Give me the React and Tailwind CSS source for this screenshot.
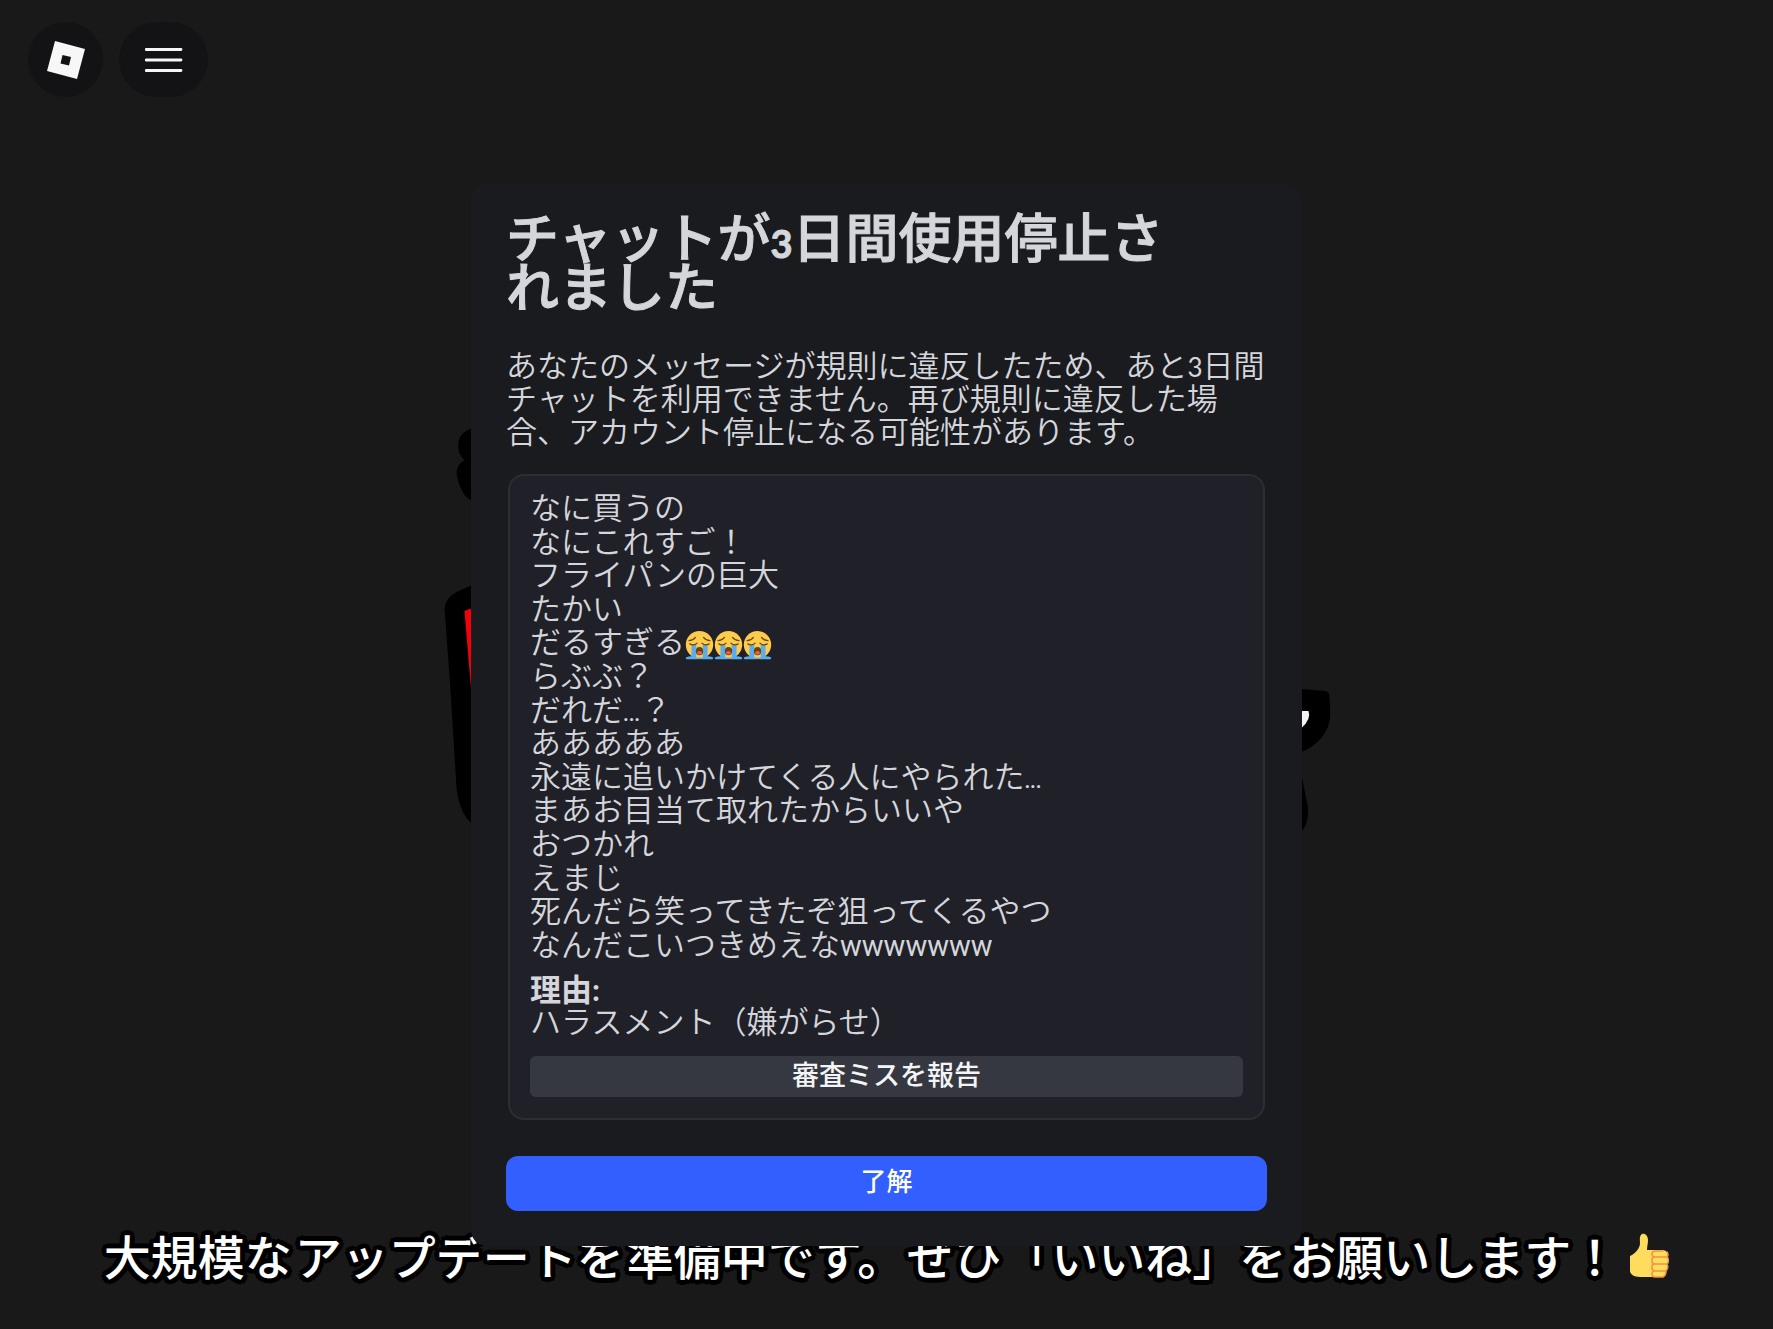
import React from "react";

const messages = [
  "なに買うの",
  "なにこれすご！",
  "フライパンの巨大",
  "たかい",
  <>だるすぎる<CryingFace /><CryingFace /><CryingFace /></>,
  "らぶぶ？",
  <>だれだ<Dots />？</>,
  "あああああ",
  <>永遠に追いかけてくる人にやられた<Dots /></>,
  "まあお目当て取れたからいいや",
  "おつかれ",
  "えまじ",
  "死んだら笑ってきたぞ狙ってくるやつ",
  <>なんだこいつきめえな<span className="font-[Roboto] text-[29px] font-normal leading-[0]">wwwwwww</span></>,
];

function Dots() {
  return <span className="font-[Lato] text-2xl font-normal leading-[0]">...</span>;
}

function CryingFace() {
  return (
    <svg viewBox="0 0 36 36" role="img" aria-label="😭" className="inline-block h-[29px] w-[29px] shrink-0 align-middle">
      <circle cx="18" cy="17" r="17" fill="#FFCB4C" />
      <path d="M8 17h6v17H8zM22 17h6v17h-6z" fill="#5DADEC" />
      <path d="M1 33Q6 30.500 14 32v3H2q-1 0-1-2zM35 33Q30 30.500 22 32v3h12q1 0 1-2z" fill="#5DADEC" />
      <path d="M13 33h10v2H13z" fill="#5DADEC" />
      <ellipse cx="18" cy="25" rx="4.500" ry="5" fill="#664500" />
      <ellipse cx="18" cy="27" rx="3" ry="2.300" fill="#E75A70" />
      <path
        d="M6 16q5 3 9-1M30 16q-5 3-9-1M5 12q5 0 8-4M31 12q-5 0-8-4"
        fill="none"
        stroke="#664500"
        strokeWidth="1.600"
        strokeLinecap="round"
      />
    </svg>
  );
}

function ThumbsUp() {
  return (
    <svg viewBox="0 0 40 45" role="img" aria-label="👍" className="ml-2 h-[45px] w-10 shrink-0">
      <path
        d="M13 1c3-1 6 2 6 6 0 4-1 6-1 10h15c5 0 7 4 5 7 2 2 2 5 0 7 1 2 1 5-1 6 1 4-1 7-5 7H11C5 44 1 41 1 38V23c4-2 9-6 10-12 0-4-1-8 2-10z"
        fill="#FFDB5E"
      />
      <path
        d="M38 24H26c-4 0-4-6 0-6h8M38 31H26c-4 0-4-6-1-7M37 38H26c-4 0-4-6-1-7M34 44h-8c-4 0-4-5-1-6M38 19c2 3 1 4 0 5 2 2 2 5 0 7 1 2 1 5-1 7 0 3-1 5-3 6"
        fill="none"
        stroke="#EE9547"
        strokeWidth="1.500"
        strokeLinecap="round"
      />
    </svg>
  );
}

// Title art of the game, mostly covered by the dialog
function GameLogo() {
  return (
    <svg
      viewBox="443 428 887 404"
      aria-hidden="true"
      className="absolute left-1/2 top-[428px] h-[404px] w-[887px] -translate-x-1/2"
    >
      <path d="M472 428q-12 4-14 13-2 13 6 19-8 5-8 13 1 10 8 22 4 5 8 5z" />
      <path d="M472 585l-16 7q-11 6-12 16l6 82 6 98q3 26 16 36z" />
      <path d="M464 611l8-3v98z" fill="#f50008" />
      <path d="M1301 689l24 2q4 1 4 5l1 17q-1 27-29 39z" />
      <path d="M1301 711h7q3 8-7 17z" fill="#f4f4f4" />
      <path d="M1301 775l6 30q3 15-6 27z" />
    </svg>
  );
}

function TopBar() {
  return (
    <header className="flex items-center gap-4 px-7 pt-[22px]">
      <button aria-label="Roblox" className="flex h-[75px] w-[75px] items-center justify-center rounded-full bg-[#131315]">
        <svg viewBox="0 0 38 38" className="h-[38px] w-[38px]">
          <path d="M8 0l30 8-8 30-30-8zM15.500 14l-2 8.500 8.500 2 2-8.500z" fill="#f7f7f8" fillRule="evenodd" />
        </svg>
      </button>
      <button aria-label="メニュー" className="flex h-[75px] w-[89px] items-center justify-center rounded-full bg-[#131315]">
        <svg viewBox="0 0 38 26" className="h-[26px] w-[38px]">
          <path d="M1 2.500h35M1 13h35M1 23.500h35" stroke="#f7f7f8" strokeWidth="2.800" strokeLinecap="round" />
        </svg>
      </button>
    </header>
  );
}

export default function App() {
  return (
    <div lang="ja" className="grid min-h-screen overflow-hidden bg-[#191919] font-['Noto_Sans_CJK_JP',sans-serif]">
      <div className="relative col-start-1 row-start-1 flex flex-col justify-between">
        <GameLogo />
        <TopBar />
        <p className="flex items-center justify-center gap-[3px] whitespace-nowrap pb-11 text-[47px] font-medium leading-[60px] text-white [text-shadow:5px_0_0_#000,4px_3px_0_#000,3px_4px_0_#000,0_5px_0_#000,-3px_4px_0_#000,-4px_3px_0_#000,-5px_0_0_#000,-4px_-3px_0_#000,-3px_-4px_0_#000,0_-5px_0_#000,3px_-4px_0_#000,4px_-3px_0_#000]">
          <span>大規模な</span>
          <span>アップデートを</span>
          <span>準備中です。</span>
          <span>ぜひ</span>
          <span>「いいね」を</span>
          <span>お願いします！</span>
          <ThumbsUp />
        </p>
      </div>

      <div className="z-10 col-start-1 row-start-1 flex items-start justify-center pt-[184px]">
        <section
          role="dialog"
          aria-labelledby="ban-title"
          className="w-[831px] max-w-full rounded-2xl bg-[#1a1b1f] px-[35px] pb-[35px] pt-[27px] text-[#d5d6db]"
        >
          <h1 id="ban-title" className="pr-20 text-[53px] font-medium leading-[49px] [-webkit-text-stroke:1px_#d5d6db]">
            チャットが<span className="font-[Lato] text-[38px] font-bold leading-[0]">3</span>日間使用停止されました
          </h1>
          <p className="mt-[38px] text-[31px] font-[350] leading-[33px]">
            あなたのメッセージが規則に違反したため、あと
            <span className="font-[Lato] text-[26px] font-normal leading-[0]">3</span>
            日間チャットを利用できません。再び規則に違反した場合、アカウント停止になる可能性があります。
          </p>

          <div className="mx-0.5 mt-7 rounded-2xl border-2 border-[#2d2e32] bg-[#202128] px-5 pb-[21px] pt-[13px] text-[31px] font-[350] leading-[33px]">
            <ul className="flex min-h-[470px] flex-col justify-between">
              {messages.map((message, i) => (
                <li key={i} className="flex h-[33px] items-baseline whitespace-nowrap">
                  <span>{message}</span>
                </li>
              ))}
            </ul>
            <dl className="mt-[13px] leading-8">
              <dt className="font-bold">
                理由<span className="font-[Lato] leading-[0]">:</span>
              </dt>
              <dd>ハラスメント（嫌がらせ）</dd>
            </dl>
            <button className="mt-5 block h-[41px] w-full rounded-md bg-[#353840] pb-1.5 text-[27px] font-medium leading-[33px] text-[#f3f4f6]">
              審査ミスを報告
            </button>
          </div>

          <button className="mt-9 block h-[55px] w-full rounded-xl bg-[#335fff] pb-2 text-[26px] font-medium leading-[33px] text-white">
            了解
          </button>
        </section>
      </div>
    </div>
  );
}
